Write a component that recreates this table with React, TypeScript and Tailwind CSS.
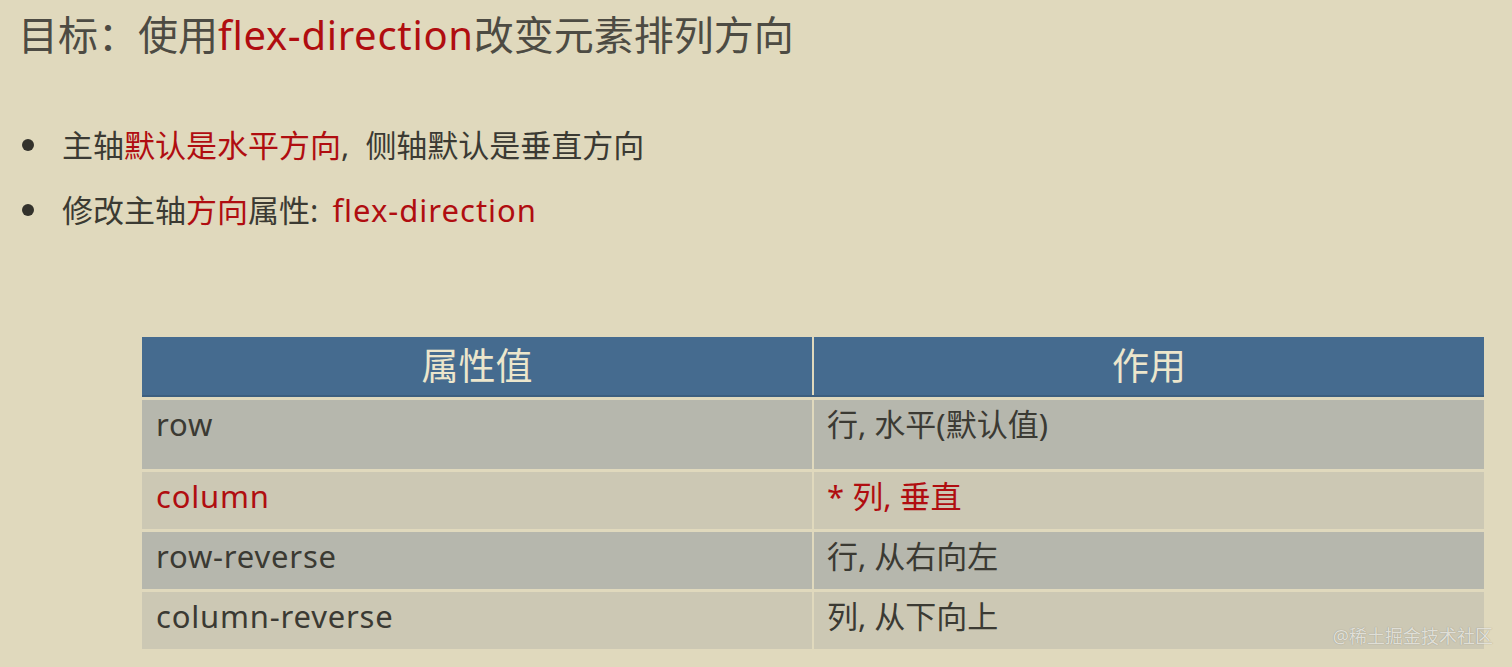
const rows = [
  { value: "row", desc: "行, 水平(默认值)", red: false, tall: true },
  { value: "column", desc: "* 列, 垂直", red: true, tall: false },
  { value: "row-reverse", desc: "行, 从右向左", red: false, tall: false },
  { value: "column-reverse", desc: "列, 从下向上", red: false, tall: false },
];

export default function App() {
  return (
    <div
      className="relative h-[667px] w-full overflow-hidden bg-[#e0d9bd] text-[#3b3a33]"
      style={{ fontFamily: '"Noto Sans", "Noto Sans CJK SC", sans-serif' }}
    >
      <h1 className="pl-[18px] pt-[11px] text-[40px] leading-[48px] font-normal text-[#4d4b43]">
        目标：使用<span className="tracking-[0.7px] text-[#b00d10]">flex-direction</span>改变元素排列方向
      </h1>

      <ul className="mt-[66px] flex flex-col gap-[25px] pl-[22px]">
        <li className="flex items-center gap-[28px] text-[31px] leading-[40px]">
          <span className="h-3 w-3 shrink-0 rounded-full bg-[#33322c]" />
          <p>
            主轴<span className="text-[#b00d10]">默认是水平方向</span>
            <span className="tracking-[4px]">, </span>侧轴默认是垂直方向
          </p>
        </li>
        <li className="flex items-center gap-[28px] text-[31px] leading-[40px]">
          <span className="h-3 w-3 shrink-0 rounded-full bg-[#33322c]" />
          <p>
            修改主轴<span className="text-[#b00d10]">方向</span>属性<span className="tracking-[3px]">: </span>
            <span className="tracking-[1px] text-[#b00d10]">flex-direction</span>
          </p>
        </li>
      </ul>

      <div className="ml-[142px] mt-[107px] w-[1342px]">
        <div className="grid grid-cols-2 gap-x-[2px] border-b-2 border-[#3d5f7f]">
          <div className="flex h-[58px] items-center justify-center bg-[#456b8f] text-[37px] text-[#ece6cc]">
            属性值
          </div>
          <div className="flex h-[58px] items-center justify-center bg-[#456b8f] text-[37px] text-[#ece6cc]">
            作用
          </div>
        </div>
        <div className="mt-[3px] flex flex-col gap-[3px]">
          {rows.map((r, i) => (
            <div
              key={r.value}
              className={`grid grid-cols-2 gap-x-[2px] text-[31px] leading-[36px] ${r.tall ? "h-[69px]" : "h-[57px]"}`}
            >
              <div
                className={`pl-[14px] pt-[6px] tracking-[0.8px] ${i % 2 === 0 ? "bg-[#b6b7ad]" : "bg-[#ccc8b4]"} ${r.red ? "text-[#b00d10]" : ""}`}
              >
                {r.value}
              </div>
              <div
                className={`pl-[13px] pt-[6px] ${i % 2 === 0 ? "bg-[#b6b7ad]" : "bg-[#ccc8b4]"} ${r.red ? "text-[#b00d10]" : ""}`}
              >
                {r.desc}
              </div>
            </div>
          ))}
        </div>
      </div>

      <div className="absolute bottom-[19px] right-[19px] text-[18px] leading-[24px] text-[#ecebe4]/90 [text-shadow:0_0_1px_rgba(0,0,0,0.35)]">
        @稀土掘金技术社区
      </div>
    </div>
  );
}
